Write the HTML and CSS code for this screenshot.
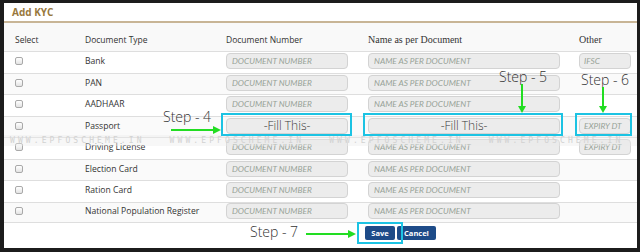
FILE: index.html
```html
<!DOCTYPE html>
<html lang="en">
	<head>
		<meta charset="UTF-8" />
		<title>Add KYC</title>
		<link rel="stylesheet" href="styles.css">
	</head>
	<body>
		<div class="panel">
			<div class="panel-head">Add KYC</div>
			<div class="kyc">
				<div class="row head">
					<span>Select</span>
					<span>Document Type</span>
					<span>Document Number</span>
					<span class="serif">Name as per Document</span>
					<span class="serif">Other</span>
				</div>
				<div class="row">
					<span class="check"></span>
					<span>Bank</span>
					<input class="num" placeholder="DOCUMENT NUMBER" />
					<input class="name" placeholder="NAME AS PER DOCUMENT" />
					<input class="other" placeholder="IFSC" />
				</div>
				<div class="row">
					<span class="check"></span>
					<span>PAN</span>
					<input class="num" placeholder="DOCUMENT NUMBER" />
					<input class="name" placeholder="NAME AS PER DOCUMENT" />
				</div>
				<div class="row">
					<span class="check"></span>
					<span>AADHAAR</span>
					<input class="num" placeholder="DOCUMENT NUMBER" />
					<input class="name" placeholder="NAME AS PER DOCUMENT" />
				</div>
				<div class="row">
					<span class="check"></span>
					<span>Passport</span>
					<input class="num fill" value="-Fill This-" readonly />
					<input class="name fill" value="-Fill This-" readonly />
					<input class="other" placeholder="EXPIRY DT" />
				</div>
				<div class="row">
					<span class="check"></span>
					<span>Driving License</span>
					<input class="num" placeholder="DOCUMENT NUMBER" />
					<input class="name" placeholder="NAME AS PER DOCUMENT" />
					<input class="other" placeholder="EXPIRY DT" />
				</div>
				<div class="row">
					<span class="check"></span>
					<span>Election Card</span>
					<input class="num" placeholder="DOCUMENT NUMBER" />
					<input class="name" placeholder="NAME AS PER DOCUMENT" />
				</div>
				<div class="row">
					<span class="check"></span>
					<span>Ration Card</span>
					<input class="num" placeholder="DOCUMENT NUMBER" />
					<input class="name" placeholder="NAME AS PER DOCUMENT" />
				</div>
				<div class="row">
					<span class="check"></span>
					<span>National Population Register</span>
					<input class="num" placeholder="DOCUMENT NUMBER" />
					<input class="name" placeholder="NAME AS PER DOCUMENT" />
				</div>
			</div>
			<div class="actions">
				<button class="btn">Save</button>
				<button class="btn">Cancel</button>
			</div>
		</div>

		<!-- tutorial annotations drawn over the form -->
		<div class="watermark">
			<span>WWW.EPFOSCHEME.IN</span>
			<span>WWW.EPFOSCHEME.IN</span>
			<span>WWW.EPFOSCHEME.IN</span>
			<span>WWW.EPFOSCHEME.IN</span>
		</div>
		<div class="step step-4">Step - 4</div>
		<div class="step step-5">Step - 5</div>
		<div class="step step-6">Step - 6</div>
		<div class="step step-7">Step - 7</div>
		<svg class="marks" width="640" height="252" viewBox="0 0 640 252">
			<g fill="none" stroke="#1cc3e3" stroke-width="2">
				<rect x="222" y="114" width="129" height="21" />
				<rect x="364" y="114" width="198" height="21" />
				<rect x="576" y="114" width="55" height="21" />
				<rect x="358" y="223" width="44" height="20" />
			</g>
			<g stroke="#22dd22" stroke-width="2">
				<line x1="171" y1="130" x2="215" y2="130" />
				<line x1="522" y1="84" x2="522" y2="108" />
				<line x1="603" y1="87" x2="603" y2="108" />
				<line x1="306" y1="234" x2="350" y2="234" />
			</g>
			<g fill="#22dd22">
				<polygon points="221,130 213,126 213,134" />
				<polygon points="522,113 518,106 526,106" />
				<polygon points="603,113 599,106 607,106" />
				<polygon points="356,234 348,230 348,238" />
			</g>
		</svg>
	</body>
</html>
```

FILE: styles.css
```css
* {
	margin: 0;
	padding: 0;
	box-sizing: border-box;
}

body {
	background-color: #1c1c1c;
	width: 640px;
	height: 252px;
	position: relative;
	overflow: hidden;
	font-family: "Open Sans", sans-serif;
}

.panel {
	margin: 3px 3px 0 4px;
	height: 245px;
	background: white;
}

.panel-head {
	height: 20px;
	padding-left: 8px;
	border-bottom: 2px solid #c8b596;
	font-size: 10px;
	font-weight: 700;
	line-height: 18px;
	color: #98783c;
}

.row {
	display: grid;
	grid-template-columns: 70px 141px 142px 211px 1fr;
	align-items: center;
	height: 21.5px;
	padding-left: 11px;
	padding-bottom: 2px;
	border-top: 1px solid #dedede;
	font-size: 8.6px;
	color: #333;
}

.row:nth-child(odd) {
	background-color: #fafafa;
}

.row:last-child {
	border-bottom: 1px solid #dedede;
}

.row.head {
	height: 28px;
	padding-top: 4px;
	padding-bottom: 0;
	border-top: none;
	background-color: #f9f9f9;
	font-size: 8.5px;
}

.serif {
	font-family: "Liberation Serif", serif;
	font-size: 10px;
}

.check {
	width: 8px;
	height: 8px;
	border: 1px solid #a9a9a9;
	border-radius: 2px;
	background: linear-gradient(#ffffff, #e3e3e3);
}

input {
	height: 16px;
	padding: 0 5px;
	border: 1px solid #d3d3d3;
	border-radius: 4px;
	background-color: #ececec;
	font-family: "Lato", sans-serif;
	font-size: 8.3px;
	font-style: italic;
	color: #444;
	outline: none;
}

input::placeholder {
	color: #97a297;
}

.num {
	width: 122px;
}

.name {
	width: 192px;
}

.other {
	width: 52px;
	padding: 0 4px;
}

.fill {
	font-family: "Open Sans", sans-serif;
	font-style: normal;
	font-size: 12px;
	font-weight: 300;
	color: #3a3a3a;
	text-align: center;
}

.actions {
	display: flex;
	gap: 2px;
	margin-top: 3px;
	padding-left: 361px;
}

.btn {
	height: 14px;
	padding: 0 5px;
	border: none;
	border-radius: 2px;
	background-color: #1d4b88;
	color: white;
	font-family: "Open Sans", sans-serif;
	font-size: 7.5px;
	font-weight: 700;
	line-height: 14px;
}

.btn:first-child {
	width: 30px;
}

.btn:last-child {
	width: 39px;
}

.watermark {
	position: absolute;
	left: 4px;
	top: 135px;
	width: 633px;
	height: 11px;
	display: flex;
	gap: 25px;
	padding-left: 6px;
	background-color: rgba(235, 235, 235, 0.4);
	font-family: "DejaVu Sans Mono", monospace;
	font-size: 8px;
	line-height: 11px;
	letter-spacing: 3.1px;
	color: #d2d2d2;
	white-space: nowrap;
}

.step {
	position: absolute;
	font-family: "Open Sans", sans-serif;
	font-size: 14px;
	font-weight: 300;
	line-height: 14px;
	color: #333;
	white-space: nowrap;
}

.step-4 {
	left: 163px;
	top: 110px;
}

.step-5 {
	left: 499px;
	top: 70px;
}

.step-6 {
	left: 581px;
	top: 73px;
}

.step-7 {
	left: 250px;
	top: 225px;
}

.marks {
	position: absolute;
	left: 0;
	top: 0;
	pointer-events: none;
}
```
